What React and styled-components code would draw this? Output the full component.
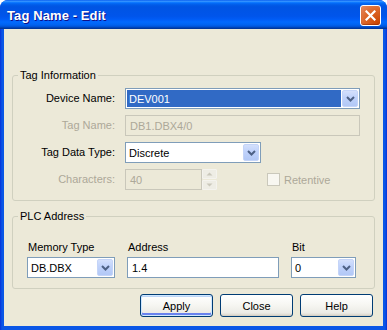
import React from 'react';
import styled, { createGlobalStyle } from 'styled-components';

const GlobalStyle = createGlobalStyle`
  html, body {
    margin: 0;
    padding: 0;
    background: #ffffff;
  }
  body {
    font-family: "Liberation Sans", Arial, sans-serif;
    font-size: 11px;
  }
`;

const Window = styled.div`
  width: 387px;
  height: 330px;
  display: flex;
  flex-direction: column;
  box-sizing: border-box;
  background: linear-gradient(to right, #0831d9 0, #0a56e6 2px, #0a56e6 385px, #0831d9 387px);
  border-radius: 8px 8px 0 0;
  overflow: hidden;
`;

const TitleBar = styled.div`
  height: 29px;
  flex-shrink: 0;
  display: flex;
  align-items: center;
  justify-content: space-between;
  padding: 1px 6px 0 7px;
  box-sizing: border-box;
  background: linear-gradient(
    to bottom,
    #0058ee 0%,
    #3a93ff 4%,
    #288eff 6%,
    #127dff 8%,
    #036ffc 10%,
    #0262ee 14%,
    #0057e5 20%,
    #0054e3 24%,
    #0055eb 56%,
    #005bf5 66%,
    #026afe 76%,
    #0062ef 86%,
    #0052d6 92%,
    #0040ab 96%,
    #003092 100%
  );
`;

const Title = styled.span`
  font-family: "Liberation Sans", Arial, sans-serif;
  font-weight: bold;
  font-size: 13px;
  color: #ffffff;
  text-shadow: 1px 1px #0f1089;
  letter-spacing: 0.1px;
`;

const CloseButton = styled.div`
  width: 21px;
  height: 21px;
  box-sizing: border-box;
  border: 1px solid #ffffff;
  border-radius: 3px;
  display: flex;
  align-items: center;
  justify-content: center;
  background: radial-gradient(circle at 90% 90%, #cc4600 0%, #dc6527 55%, #e48a62 100%);
  box-shadow: inset 0 -1px 1px rgba(120, 30, 0, 0.5);
`;

const Body = styled.div`
  flex: 1;
  margin: 0 4px 4px;
  padding: 40px 8px 0;
  background: #ece9d8;
  display: flex;
  flex-direction: column;
`;

const Group = styled.fieldset`
  margin: 0 0 ${({ $gap }) => $gap || 0}px;
  padding: 0;
  min-width: 0;
  border: 1px solid #d0d0bf;
  border-radius: 3px;
`;

const Legend = styled.legend`
  margin-left: 5px;
  padding: 0 2px;
  line-height: 13px;
  font-size: 11px;
  color: #000000;
`;

const InfoGrid = styled.div`
  display: grid;
  grid-template-columns: 102px 1fr;
  grid-auto-rows: 21px;
  column-gap: 10px;
  row-gap: 6px;
  padding: 6px 14px 10px 0;
`;

const Label = styled.div`
  display: flex;
  align-items: center;
  justify-content: ${({ $right }) => ($right ? 'flex-end' : 'flex-start')};
  color: ${({ $disabled }) => ($disabled ? '#aca899' : '#000000')};
  white-space: nowrap;
  padding-left: ${({ $right }) => ($right ? 0 : 1)}px;
  line-height: 13px;
`;

const Cell = styled.div`
  display: flex;
  align-items: center;
  min-width: 0;
`;

const Combo = styled.div`
  width: ${({ $width }) => ($width ? `${$width}px` : '100%')};
  height: 21px;
  box-sizing: border-box;
  border: 1px solid #7f9db9;
  background: #ffffff;
  padding: 1px;
  display: flex;
  gap: 1px;
`;

const ComboValue = styled.div`
  flex: 1;
  display: flex;
  align-items: center;
  padding: 0 2px;
  background: ${({ $selected }) => ($selected ? '#316ac5' : 'transparent')};
  color: ${({ $selected }) => ($selected ? '#ffffff' : '#000000')};
  white-space: nowrap;
  overflow: hidden;
`;

const DropButton = styled.div`
  width: 16px;
  flex-shrink: 0;
  box-sizing: border-box;
  border: 1px solid #c4d4f8;
  border-radius: 2px;
  display: flex;
  align-items: center;
  justify-content: center;
  background: linear-gradient(to bottom, #d4e0fc 0%, #c1d3fb 40%, #b2c8f6 100%);
`;

const TextBox = styled.div`
  width: ${({ $width }) => ($width ? `${$width}px` : '100%')};
  height: ${({ $height }) => $height || 21}px;
  box-sizing: border-box;
  border: 1px solid ${({ $disabled }) => ($disabled ? '#c9c7ba' : '#7f9db9')};
  background: ${({ $disabled }) => ($disabled ? '#ece9d8' : '#ffffff')};
  color: ${({ $disabled }) => ($disabled ? '#aca899' : '#000000')};
  display: flex;
  align-items: center;
  padding: 0 4px;
  white-space: nowrap;
`;

const Spinner = styled.div`
  width: 15px;
  height: 21px;
  display: flex;
  flex-direction: column;
  gap: 1px;
  flex-shrink: 0;
`;

const SpinPart = styled.div`
  flex: 1;
  box-sizing: border-box;
  border: 1px solid #f4f3ee;
  border-radius: 1px;
  display: flex;
  align-items: center;
  justify-content: center;
  background: #eeede5;
`;

const CheckWrap = styled.div`
  display: flex;
  align-items: center;
  gap: 4px;
  margin-left: 50px;
  color: #aca899;
`;

const CheckBox = styled.div`
  width: 13px;
  height: 13px;
  box-sizing: border-box;
  border: 1px solid #cac8bb;
  background: #f8f7f1;
`;

const PlcGrid = styled.div`
  display: grid;
  grid-template-columns: 88px 152px 65px;
  grid-template-rows: 13px 21px;
  column-gap: 12px;
  row-gap: 3px;
  padding: 18px 0 10px 14px;
`;

const ButtonRow = styled.div`
  display: flex;
  justify-content: flex-end;
  gap: 7px;
  margin-top: 5px;
  padding-right: 2px;
`;

const Button = styled.div`
  width: 73px;
  height: 23px;
  box-sizing: border-box;
  border: 1px solid #003c74;
  border-radius: 3px;
  display: flex;
  align-items: center;
  justify-content: center;
  color: #000000;
  background: linear-gradient(to bottom, #ffffff 0%, #f7f7f3 45%, #ecebe6 85%, #d6d0c5 100%);
  box-shadow: ${({ $default }) =>
    $default
      ? 'inset 0 0 0 1px #cee7ff, inset 0 -2px 0 1px #6982ee, inset 0 2px 0 0 #bcd4f6'
      : 'inset 0 -1px 0 0 #d6d0c5'};
`;

const Chevron = () => (
  <svg width="9" height="6" viewBox="0 0 9 6">
    <polyline points="1,1 4.5,4.5 8,1" fill="none" stroke="#4d6185" strokeWidth="2" />
  </svg>
);

const SpinArrow = ({ up }) => (
  <svg width="7" height="4" viewBox="0 0 7 4">
    <polygon points={up ? '0.5,3.5 3.5,0.5 6.5,3.5' : '0.5,0.5 3.5,3.5 6.5,0.5'} fill="#cac8bb" />
  </svg>
);

const ComboBox = ({ value, width, selected }) => (
  <Combo $width={width}>
    <ComboValue $selected={selected}>{value}</ComboValue>
    <DropButton>
      <Chevron />
    </DropButton>
  </Combo>
);

const App = () => (
  <>
    <GlobalStyle />
    <Window>
      <TitleBar>
        <Title>Tag Name - Edit</Title>
        <CloseButton>
          <svg width="11" height="11" viewBox="0 0 11 11">
            <path d="M1.5 1.5 L9.5 9.5 M9.5 1.5 L1.5 9.5" stroke="#ffffff" strokeWidth="2.2" strokeLinecap="square" />
          </svg>
        </CloseButton>
      </TitleBar>
      <Body>
        <Group $gap={9}>
          <Legend>Tag Information</Legend>
          <InfoGrid>
            <Label $right>Device Name:</Label>
            <Cell>
              <ComboBox value="DEV001" selected />
            </Cell>
            <Label $right $disabled>
              Tag Name:
            </Label>
            <Cell>
              <TextBox $disabled>DB1.DBX4/0</TextBox>
            </Cell>
            <Label $right>Tag Data Type:</Label>
            <Cell>
              <ComboBox value="Discrete" width={136} />
            </Cell>
            <Label $right $disabled>
              Characters:
            </Label>
            <Cell>
              <TextBox $disabled $width={77}>
                40
              </TextBox>
              <Spinner>
                <SpinPart>
                  <SpinArrow up />
                </SpinPart>
                <SpinPart>
                  <SpinArrow />
                </SpinPart>
              </Spinner>
              <CheckWrap>
                <CheckBox />
                Retentive
              </CheckWrap>
            </Cell>
          </InfoGrid>
        </Group>
        <Group>
          <Legend>PLC Address</Legend>
          <PlcGrid>
            <Label>Memory Type</Label>
            <Label>Address</Label>
            <Label>Bit</Label>
            <ComboBox value="DB.DBX" />
            <TextBox>1.4</TextBox>
            <ComboBox value="0" />
          </PlcGrid>
        </Group>
        <ButtonRow>
          <Button $default>Apply</Button>
          <Button>Close</Button>
          <Button>Help</Button>
        </ButtonRow>
      </Body>
    </Window>
  </>
);

export default App;
